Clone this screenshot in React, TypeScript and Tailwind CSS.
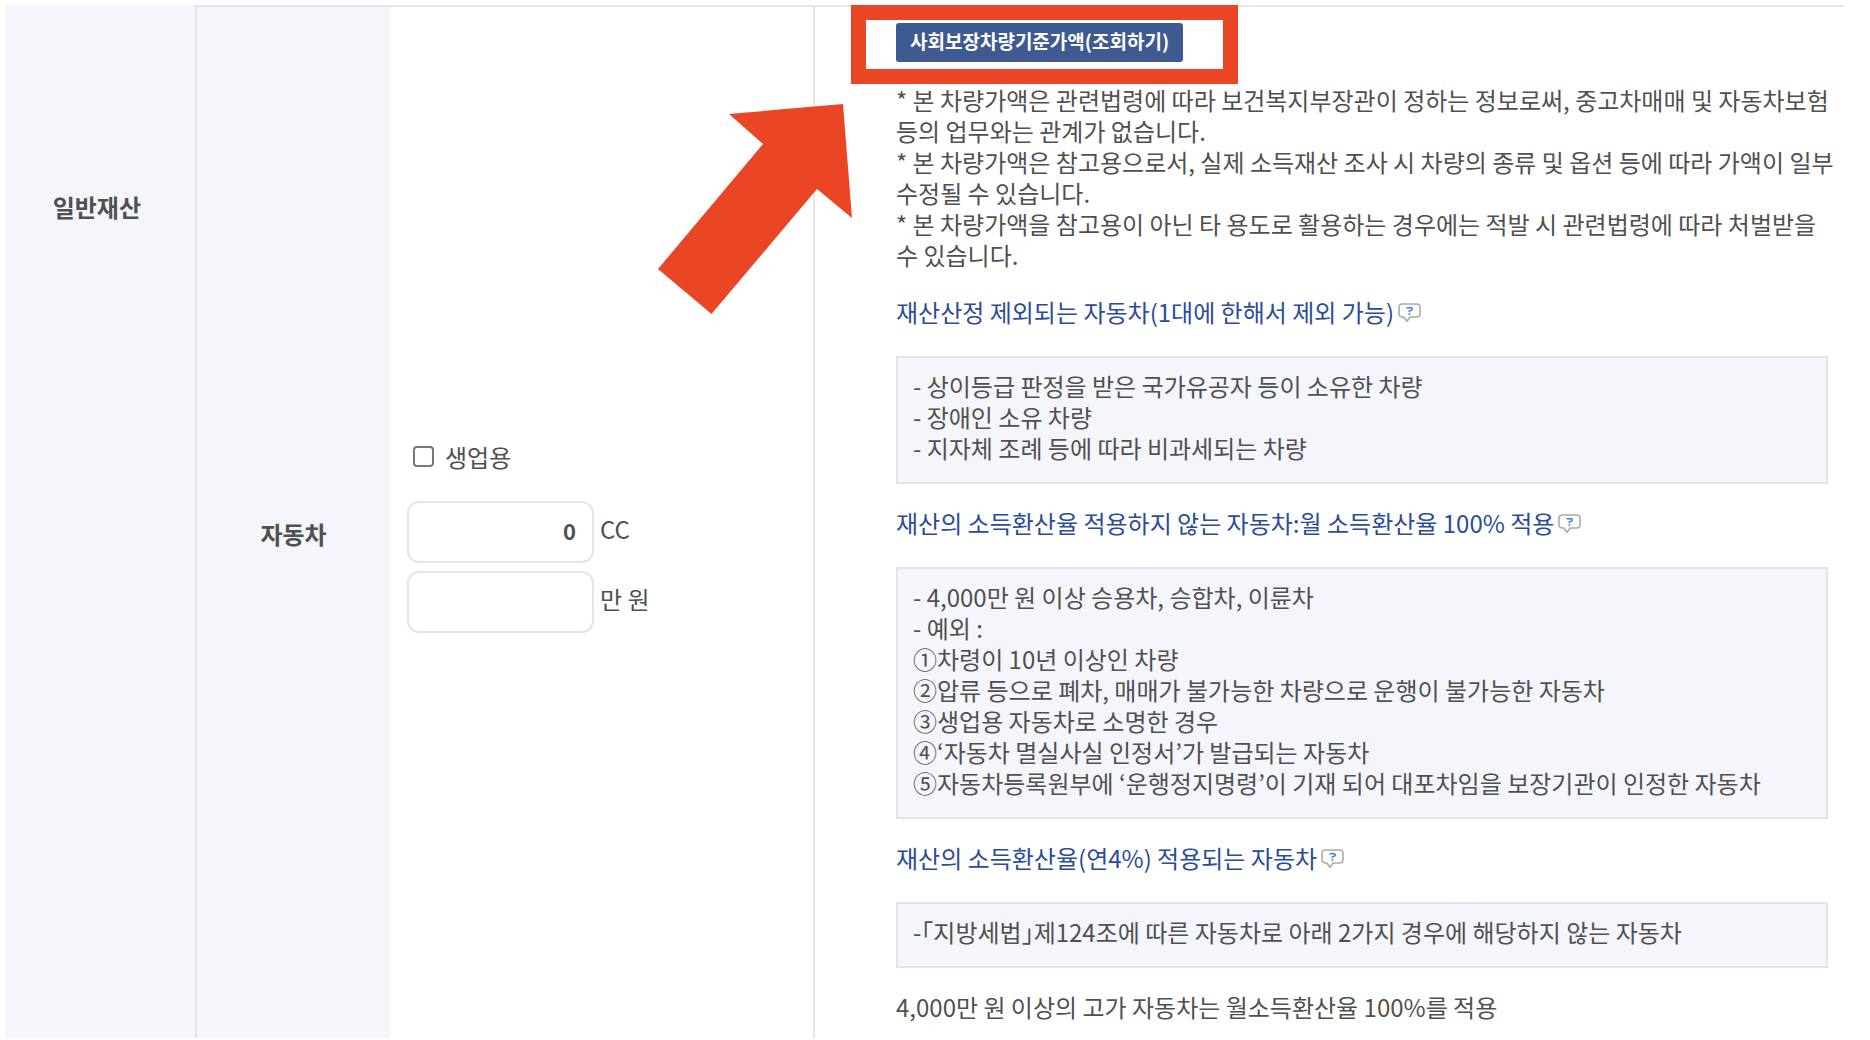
import type { ReactNode } from "react";

function HelpButton({ label }: { label: string }) {
  return (
    <button type="button" aria-label={label} className="shrink-0 pt-[2px]">
      <svg width="23" height="20" viewBox="0 0 23 20" fill="none" aria-hidden="true">
        <path
          d="M4.5 1h14C20.8 1 22 2.2 22 4.200v6.600c0 2-1.200 3.200-3.500 3.200h-6.300L9 18.300 5.800 14H4.500C2.200 14 1 12.800 1 10.800V4.200C1 2.200 2.200 1 4.500 1z"
          fill="#fff"
          stroke="#aaaaaa"
          strokeWidth="1.600"
          strokeLinejoin="round"
        />
        <path d="M8.500 4.700h4.700c1.300 0 1.500 2 .2 2.400l-2 .8v1.400" stroke="#3b7be8" strokeWidth="1.500" />
        <path d="M10.500 10.300h1.800v1.500h-1.800z" fill="#3b7be8" />
      </svg>
    </button>
  );
}

function Section({ title, children }: { title: string; children: ReactNode }) {
  return (
    <section className="mt-[23px]">
      <h3 className="flex items-center gap-1 leading-[31px] font-normal text-[#2b4c9b]">
        {title}
        <HelpButton label={`${title} 도움말`} />
      </h3>
      <ul className="mt-[29px] border-2 border-[#e4e4e6] bg-[#f5f6fc] px-[15px] pt-3 pb-[19px]">{children}</ul>
    </section>
  );
}

function AmountField({ id, unit, value }: { id: string; unit: string; value?: string }) {
  return (
    <div className="flex items-center gap-[6px]">
      <input
        id={id}
        type="text"
        defaultValue={value}
        className="h-[62px] w-[187px] rounded-xl border-2 border-[#e5e5e5] bg-white px-4 pb-1 text-right text-[22px] font-bold text-[#505050] outline-none"
      />
      <label htmlFor={id} className="pb-[5px]">
        {unit}
      </label>
    </div>
  );
}

export default function App() {
  return (
    <main className="bg-white pt-[5px] pr-[26px] pb-[2px] pl-[5px] font-['Noto_Sans_CJK_KR',sans-serif] text-[#505050]">
      <table className="w-full border-separate border-spacing-0 text-2xl">
        <tbody>
          <tr>
            <th scope="rowgroup" className="w-[190px] bg-[#f5f6fc] pt-[186px] pr-[54px] text-right align-top font-bold">
              일반재산
            </th>
            <th
              scope="row"
              className="w-[195px] border-t-2 border-l-2 border-[#e5e5e5] bg-[#f5f6fc] pt-[22px] text-center align-middle font-bold"
            >
              자동차
            </th>
            <td className="w-[423px] border-t-2 border-[#e5e5e5] pt-7 pl-[17px] align-middle">
              <label className="mb-7 flex items-center gap-[11px] pl-[6px]">
                <input
                  type="checkbox"
                  className="size-[21px] appearance-none rounded-sm border-2 border-[#777] bg-white checked:bg-[#3f5a90]"
                />
                생업용
              </label>
              <div className="flex flex-col gap-2">
                <AmountField id="displacement" unit="CC" value="0" />
                <AmountField id="price" unit="만 원" />
              </div>
            </td>
            <td className="border-t-2 border-l-2 border-[#e5e5e5] pt-4 pr-4 pb-4 pl-[81px] align-top leading-[31px]">
              <div className="relative w-fit">
                <button
                  type="button"
                  className="block h-[39px] rounded-[3px] bg-[#3f5a90] px-[14px] pb-1 text-[19px] leading-[35px] font-bold text-white"
                >
                  사회보장차량기준가액(조회하기)
                </button>
                <div className="pointer-events-none absolute -top-[18px] -right-[55px] -bottom-[22px] -left-[45px] border-[15px] border-[#ea4525]" />
                <svg
                  className="pointer-events-none absolute top-[81px] -left-[238px]"
                  width="194"
                  height="210"
                  viewBox="0 0 194 210"
                  aria-hidden="true"
                >
                  <path d="M71 10 185 0l9 114-35-29L53.500 210 0 165 105 40z" fill="#ea4525" />
                </svg>
              </div>
              <div className="mt-[22px] -mr-2 pb-[3px] break-keep">
                <p>* 본 차량가액은 관련법령에 따라 보건복지부장관이 정하는 정보로써, 중고차매매 및 자동차보험 등의 업무와는 관계가 없습니다.</p>
                <p>* 본 차량가액은 참고용으로서, 실제 소득재산 조사 시 차량의 종류 및 옵션 등에 따라 가액이 일부 수정될 수 있습니다.</p>
                <p>* 본 차량가액을 참고용이 아닌 타 용도로 활용하는 경우에는 적발 시 관련법령에 따라 처벌받을 수 있습니다.</p>
              </div>
              <Section title="재산산정 제외되는 자동차(1대에 한해서 제외 가능)">
                <li>- 상이등급 판정을 받은 국가유공자 등이 소유한 차량</li>
                <li>- 장애인 소유 차량</li>
                <li>- 지자체 조례 등에 따라 비과세되는 차량</li>
              </Section>
              <Section title="재산의 소득환산율 적용하지 않는 자동차:월 소득환산율 100% 적용">
                <li>- 4,000만 원 이상 승용차, 승합차, 이륜차</li>
                <li>- 예외 :</li>
                <li>①차령이 10년 이상인 차량</li>
                <li>②압류 등으로 폐차, 매매가 불가능한 차량으로 운행이 불가능한 자동차</li>
                <li>③생업용 자동차로 소명한 경우</li>
                <li>④‘자동차 멸실사실 인정서’가 발급되는 자동차</li>
                <li>⑤자동차등록원부에 ‘운행정지명령’이 기재 되어 대포차임을 보장기관이 인정한 자동차</li>
              </Section>
              <Section title="재산의 소득환산율(연4%) 적용되는 자동차">
                <li className="[font-feature-settings:'halt']">
                  -「지방세법」제124조에 따른 자동차로 아래 2가지 경우에 해당하지 않는 자동차
                </li>
              </Section>
              <p className="mt-[23px]">4,000만 원 이상의 고가 자동차는 월소득환산율 100%를 적용</p>
            </td>
          </tr>
        </tbody>
      </table>
    </main>
  );
}
